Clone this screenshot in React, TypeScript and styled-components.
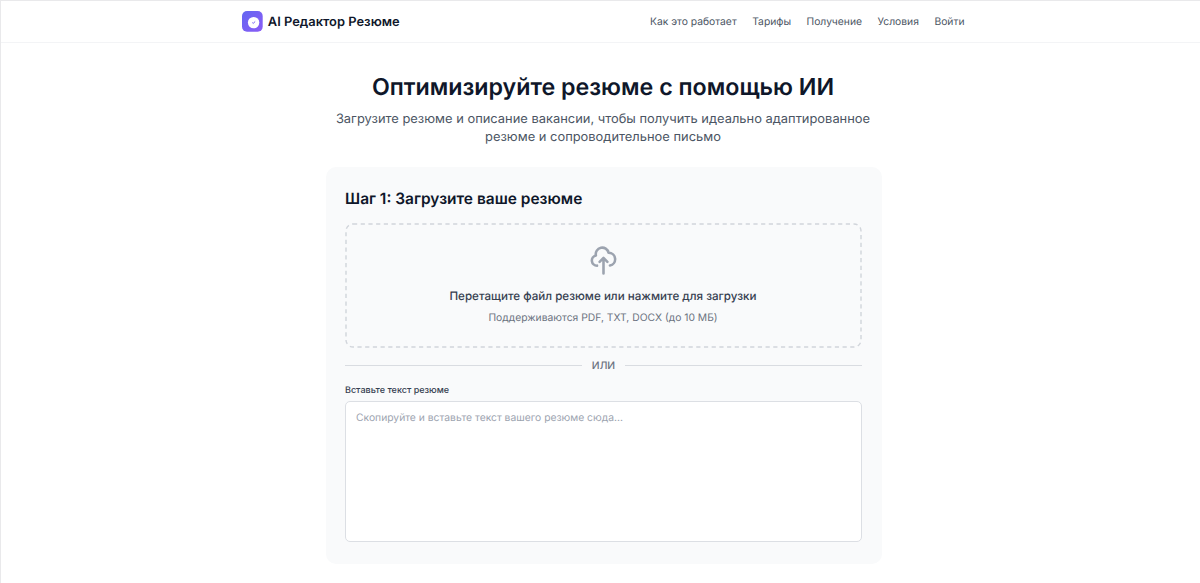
import React from "react";
import styled, { createGlobalStyle } from "styled-components";

const GlobalStyle = createGlobalStyle`
  *, *::before, *::after { box-sizing: border-box; }
  body {
    margin: 0;
    background: #fff;
    font-family: Inter, "Liberation Sans", sans-serif;
    text-rendering: geometricPrecision;
  }
  h1, h2, p { margin: 0; }
`;

const Page = styled.div`
  height: 583px;
  overflow: hidden;
  border-top: 1px solid #e9e9eb;
  border-left: 1px solid #e9e9eb;
  color: #0f172a;
`;

const Header = styled.header`
  height: 42px;
  border-bottom: 1px solid #f3f4f6;
`;

const HeaderInner = styled.div`
  display: flex;
  align-items: center;
  justify-content: space-between;
  width: 722.5px;
  height: 41px;
  margin-left: 241px;
`;

const Brand = styled.div`
  display: flex;
  align-items: center;
  gap: 4.8px;
  font-size: 12.9px;
  font-weight: 600;
  white-space: nowrap;
`;

const BrandName = styled.span`
  padding-top: 2px;
  line-height: 16px;
`;

const BrandMark = styled.svg`
  display: block;
  width: 21px;
  height: 21px;
`;

const Nav = styled.nav`
  display: flex;
  gap: 15.5px;
`;

const NavLink = styled.a`
  font-size: 10.32px;
  line-height: 16px;
  color: #4b5563;
  white-space: nowrap;
`;

const Main = styled.main`
  width: 556px;
  margin-left: 325px;
  padding-top: 30px;
`;

const Title = styled.h1`
  padding-right: 2px;
  font-size: 23.22px;
  line-height: 28px;
  font-weight: 600;
  text-align: center;
  white-space: nowrap;
`;

const Subtitle = styled.p`
  margin-top: 10px;
  padding-right: 2px;
  font-size: 12.9px;
  line-height: 18px;
  color: #4b5563;
  text-align: center;
  white-space: nowrap;
`;

const Card = styled.section`
  height: 397px;
  margin-top: 20px;
  padding: 22px 20px 0 19px;
  border-radius: 10px;
  background: #f9fafb;
`;

const CardTitle = styled.h2`
  font-size: 15.48px;
  line-height: 20px;
  font-weight: 600;
`;

const DropZone = styled.div`
  position: relative;
  display: flex;
  flex-direction: column;
  align-items: center;
  height: 125px;
  margin-top: 14px;
  padding-top: 22px;
`;

const DashedOutline = styled.svg`
  position: absolute;
  inset: 0;
  width: 100%;
  height: 100%;
  pointer-events: none;
`;

const CloudIcon = styled.svg`
  display: block;
  width: 31px;
  height: 31px;
  color: #9ca3af;
`;

const DropTitle = styled.p`
  margin-top: 11px;
  padding-right: 1px;
  font-size: 11.61px;
  line-height: 18px;
  font-weight: 500;
  color: #374151;
`;

const DropHint = styled.p`
  margin-top: 5px;
  padding-right: 1px;
  font-size: 10.32px;
  line-height: 16px;
  color: #6b7280;
`;

const Divider = styled.div`
  display: flex;
  align-items: center;
  gap: 10px;
  height: 16px;
  margin-top: 9px;
  font-size: 10.32px;
  font-weight: 500;
  line-height: 14px;
  color: #6b7280;

  &::before, &::after {
    content: "";
    flex: 1;
    height: 1px;
    background: #d9dce1;
  }
`;

const DividerText = styled.span`
  padding-top: 2px;
`;

const Label = styled.label`
  display: block;
  margin-top: 11px;
  font-size: 9.03px;
  line-height: 14px;
  font-weight: 500;
  color: #374151;
`;

const TextArea = styled.textarea`
  display: block;
  width: 100%;
  height: 141px;
  margin-top: 3px;
  padding: 8px 10px;
  border: 1px solid #dcdfe4;
  border-radius: 5px;
  background: #fff;
  font-family: inherit;
  font-size: 10.32px;
  line-height: 16px;
  text-rendering: inherit;
  resize: none;
  outline: none;

  &::placeholder { color: #9ca3af; opacity: 1; }
`;

const links = ["Как это работает", "Тарифы", "Получение", "Условия", "Войти"];

export default function App() {
  return (
    <>
      <GlobalStyle />
      <Page>
        <Header>
          <HeaderInner>
            <Brand>
              <BrandMark viewBox="0 0 21 21">
                <defs>
                  <linearGradient id="brand" x1="0" y1="0" x2="1" y2="1">
                    <stop offset="0" stopColor="#6366f1" />
                    <stop offset="1" stopColor="#8b5cf6" />
                  </linearGradient>
                </defs>
                <rect width="20.7" height="20.7" rx="5" fill="url(#brand)" />
                <circle cx="11.6" cy="11.6" r="5.7" fill="#fff" />
                <path d="M10.3 11.6l.9.8 2-1.9" fill="none" stroke="#7560f4" strokeWidth="1" />
              </BrandMark>
              <BrandName>AI Редактор Резюме</BrandName>
            </Brand>
            <Nav>
              {links.map((text) => (
                <NavLink key={text}>{text}</NavLink>
              ))}
            </Nav>
          </HeaderInner>
        </Header>
        <Main>
          <Title>Оптимизируйте резюме с помощью ИИ</Title>
          <Subtitle>
            Загрузите резюме и описание вакансии, чтобы получить идеально адаптированное
            <br />
            резюме и сопроводительное письмо
          </Subtitle>
          <Card>
            <CardTitle>Шаг 1: Загрузите ваше резюме</CardTitle>
            <DropZone>
              <DashedOutline viewBox="0 0 517 125">
                <rect
                  x="1"
                  y="1"
                  width="515"
                  height="123"
                  rx="7"
                  fill="none"
                  stroke="#d1d5db"
                  strokeWidth="1.4"
                  strokeDasharray="4.2 3.5"
                />
              </DashedOutline>
              <CloudIcon
                viewBox="0 0 24 24"
                fill="none"
                stroke="currentColor"
                strokeWidth="2"
                strokeLinecap="round"
                strokeLinejoin="round"
              >
                <path d="M7 16a4 4 0 01-.88-7.903A5 5 0 1115.9 6L16 6a5 5 0 011 9.9M15 13l-3-3m0 0l-3 3m3-3v12" />
              </CloudIcon>
              <DropTitle>Перетащите файл резюме или нажмите для загрузки</DropTitle>
              <DropHint>Поддерживаются PDF, TXT, DOCX (до 10 МБ)</DropHint>
            </DropZone>
            <Divider>
              <DividerText>ИЛИ</DividerText>
            </Divider>
            <Label htmlFor="resume">Вставьте текст резюме</Label>
            <TextArea id="resume" placeholder="Скопируйте и вставьте текст вашего резюме сюда..." />
          </Card>
        </Main>
      </Page>
    </>
  );
}
